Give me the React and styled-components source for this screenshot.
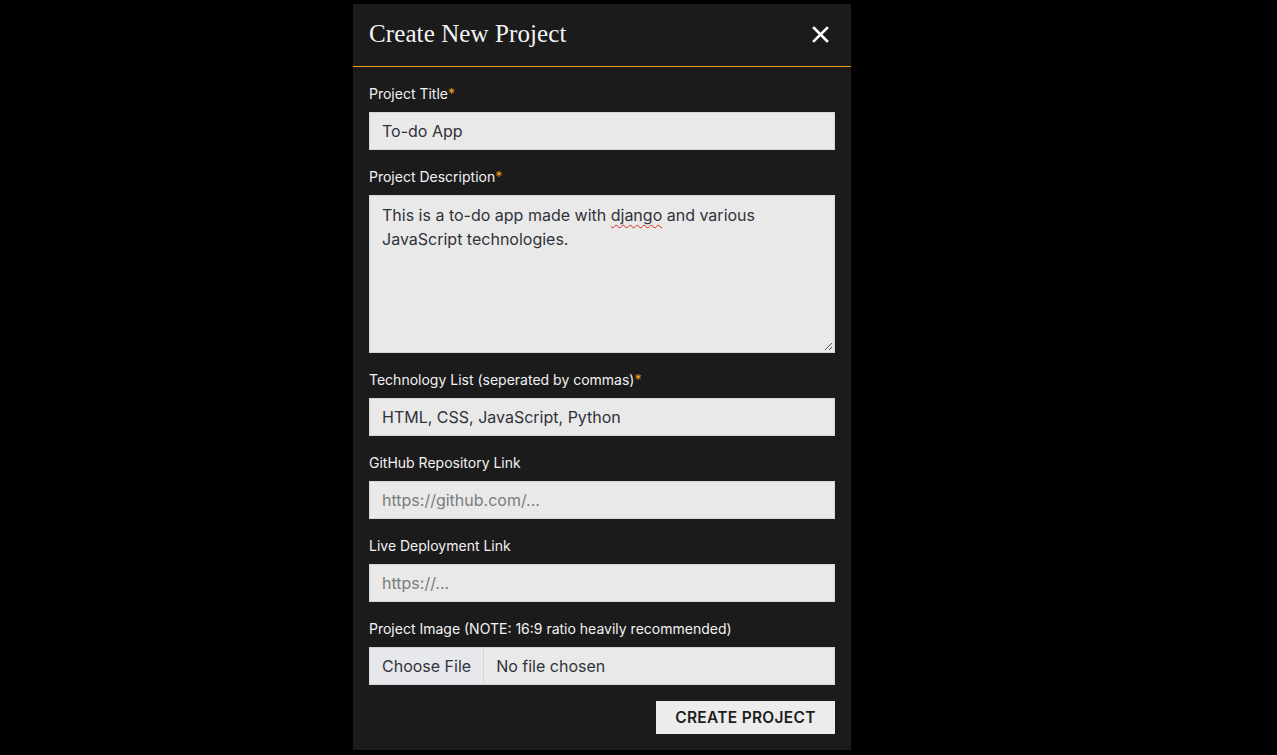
import React from 'react'
import styled, { createGlobalStyle } from 'styled-components'

const GlobalStyle = createGlobalStyle`
  html, body {
    margin: 0;
    padding: 0;
    background: #000;
  }
  body {
    font-family: Inter, "Noto Sans", sans-serif;
  }
  * {
    box-sizing: border-box;
  }
`

const Page = styled.div`
  min-height: 755px;
  padding-top: 4px;
  background: #000;
`

const Modal = styled.div`
  width: 498px;
  margin-left: 353px;
  background: #1b1b1b;
  color: #fff;
`

const Header = styled.div`
  height: 63px;
  display: flex;
  align-items: center;
  justify-content: space-between;
  padding: 0 22px 2px 16px;
  border-bottom: 1px solid #f0a01e;
`

const Title = styled.h2`
  margin: 0;
  font-family: "Liberation Serif", "DejaVu Serif", serif;
  font-weight: 400;
  font-size: 25px;
  letter-spacing: 0.1px;
  color: #f4f4f4;
`

const CloseButton = styled.button`
  background: none;
  border: none;
  padding: 0;
  display: flex;
  color: #fff;
  cursor: pointer;
`

const Body = styled.form`
  padding: 18px 16px 16px;
  display: flex;
  flex-direction: column;
`

const Field = styled.div`
  display: flex;
  flex-direction: column;
  margin-bottom: ${({ last }) => (last ? '16px' : '18px')};
`

const Label = styled.label`
  font-size: 14px;
  line-height: 17px;
  margin-bottom: 10px;
  color: #f2f2f2;
`

const Star = styled.span`
  color: #f0a01e;
`

const Input = styled.input`
  height: 38px;
  width: 100%;
  padding: 0 12px;
  background: #e9e9e9;
  border: 1px solid #d4d6da;
  font-family: Inter, "Noto Sans", sans-serif;
  font-size: 16px;
  color: #30333a;
  outline: none;
  &::placeholder {
    color: #7c7c7c;
  }
`

const TextArea = styled.div`
  position: relative;
  height: 158px;
  padding: 7px 12px;
  background: #e9e9e9;
  border: 1px solid #d4d6da;
  font-size: 16px;
  line-height: 24px;
  color: #30333a;
`

const Misspelled = styled.span`
  text-decoration: underline wavy #e0281e;
  text-decoration-thickness: 1px;
  text-underline-offset: 3px;
`

const Grip = styled.svg`
  position: absolute;
  right: 1px;
  bottom: 1px;
`

const FileBox = styled.div`
  display: flex;
  height: 38px;
  background: #e9e9e9;
  border: 1px solid #d4d6da;
  font-size: 16px;
  color: #30333a;
`

const FileButton = styled.span`
  display: flex;
  align-items: center;
  padding: 0 12px;
  background: #e6e8ec;
  border-right: 1px solid #d4d6da;
`

const FileName = styled.span`
  display: flex;
  align-items: center;
  padding: 0 12px;
`

const Actions = styled.div`
  display: flex;
  justify-content: flex-end;
`

const SubmitButton = styled.button`
  height: 33px;
  width: 179px;
  background: #ececec;
  border: none;
  font-family: Inter, "Noto Sans", sans-serif;
  font-size: 15.5px;
  font-weight: 600;
  letter-spacing: 0.3px;
  text-transform: uppercase;
  color: #1e1e1e;
  cursor: pointer;
`

const App = () => (
  <Page>
    <GlobalStyle />
    <Modal>
      <Header>
        <Title>Create New Project</Title>
        <CloseButton type="button" aria-label="Close">
          <svg width="17" height="17" viewBox="0 0 17 17">
            <path d="M2 2 L15 15 M15 2 L2 15" stroke="#fff" strokeWidth="2.6" strokeLinecap="square" />
          </svg>
        </CloseButton>
      </Header>
      <Body>
        <Field>
          <Label>Project Title<Star>*</Star></Label>
          <Input defaultValue="To-do App" />
        </Field>
        <Field>
          <Label>Project Description<Star>*</Star></Label>
          <TextArea>
            This is a to-do app made with <Misspelled>django</Misspelled> and various JavaScript technologies.
            <Grip width="10" height="10" viewBox="0 0 10 10">
              <path d="M9 2 L2 9 M9 6 L6 9" stroke="#555" strokeWidth="1" />
            </Grip>
          </TextArea>
        </Field>
        <Field>
          <Label>Technology List (seperated by commas)<Star>*</Star></Label>
          <Input defaultValue="HTML, CSS, JavaScript, Python" />
        </Field>
        <Field>
          <Label>GitHub Repository Link</Label>
          <Input placeholder="https://github.com/..." />
        </Field>
        <Field>
          <Label>Live Deployment Link</Label>
          <Input placeholder="https://..." />
        </Field>
        <Field last>
          <Label>Project Image (NOTE: 16:9 ratio heavily recommended)</Label>
          <FileBox>
            <FileButton>Choose File</FileButton>
            <FileName>No file chosen</FileName>
          </FileBox>
        </Field>
        <Actions>
          <SubmitButton type="button">Create Project</SubmitButton>
        </Actions>
      </Body>
    </Modal>
  </Page>
)

export default App
